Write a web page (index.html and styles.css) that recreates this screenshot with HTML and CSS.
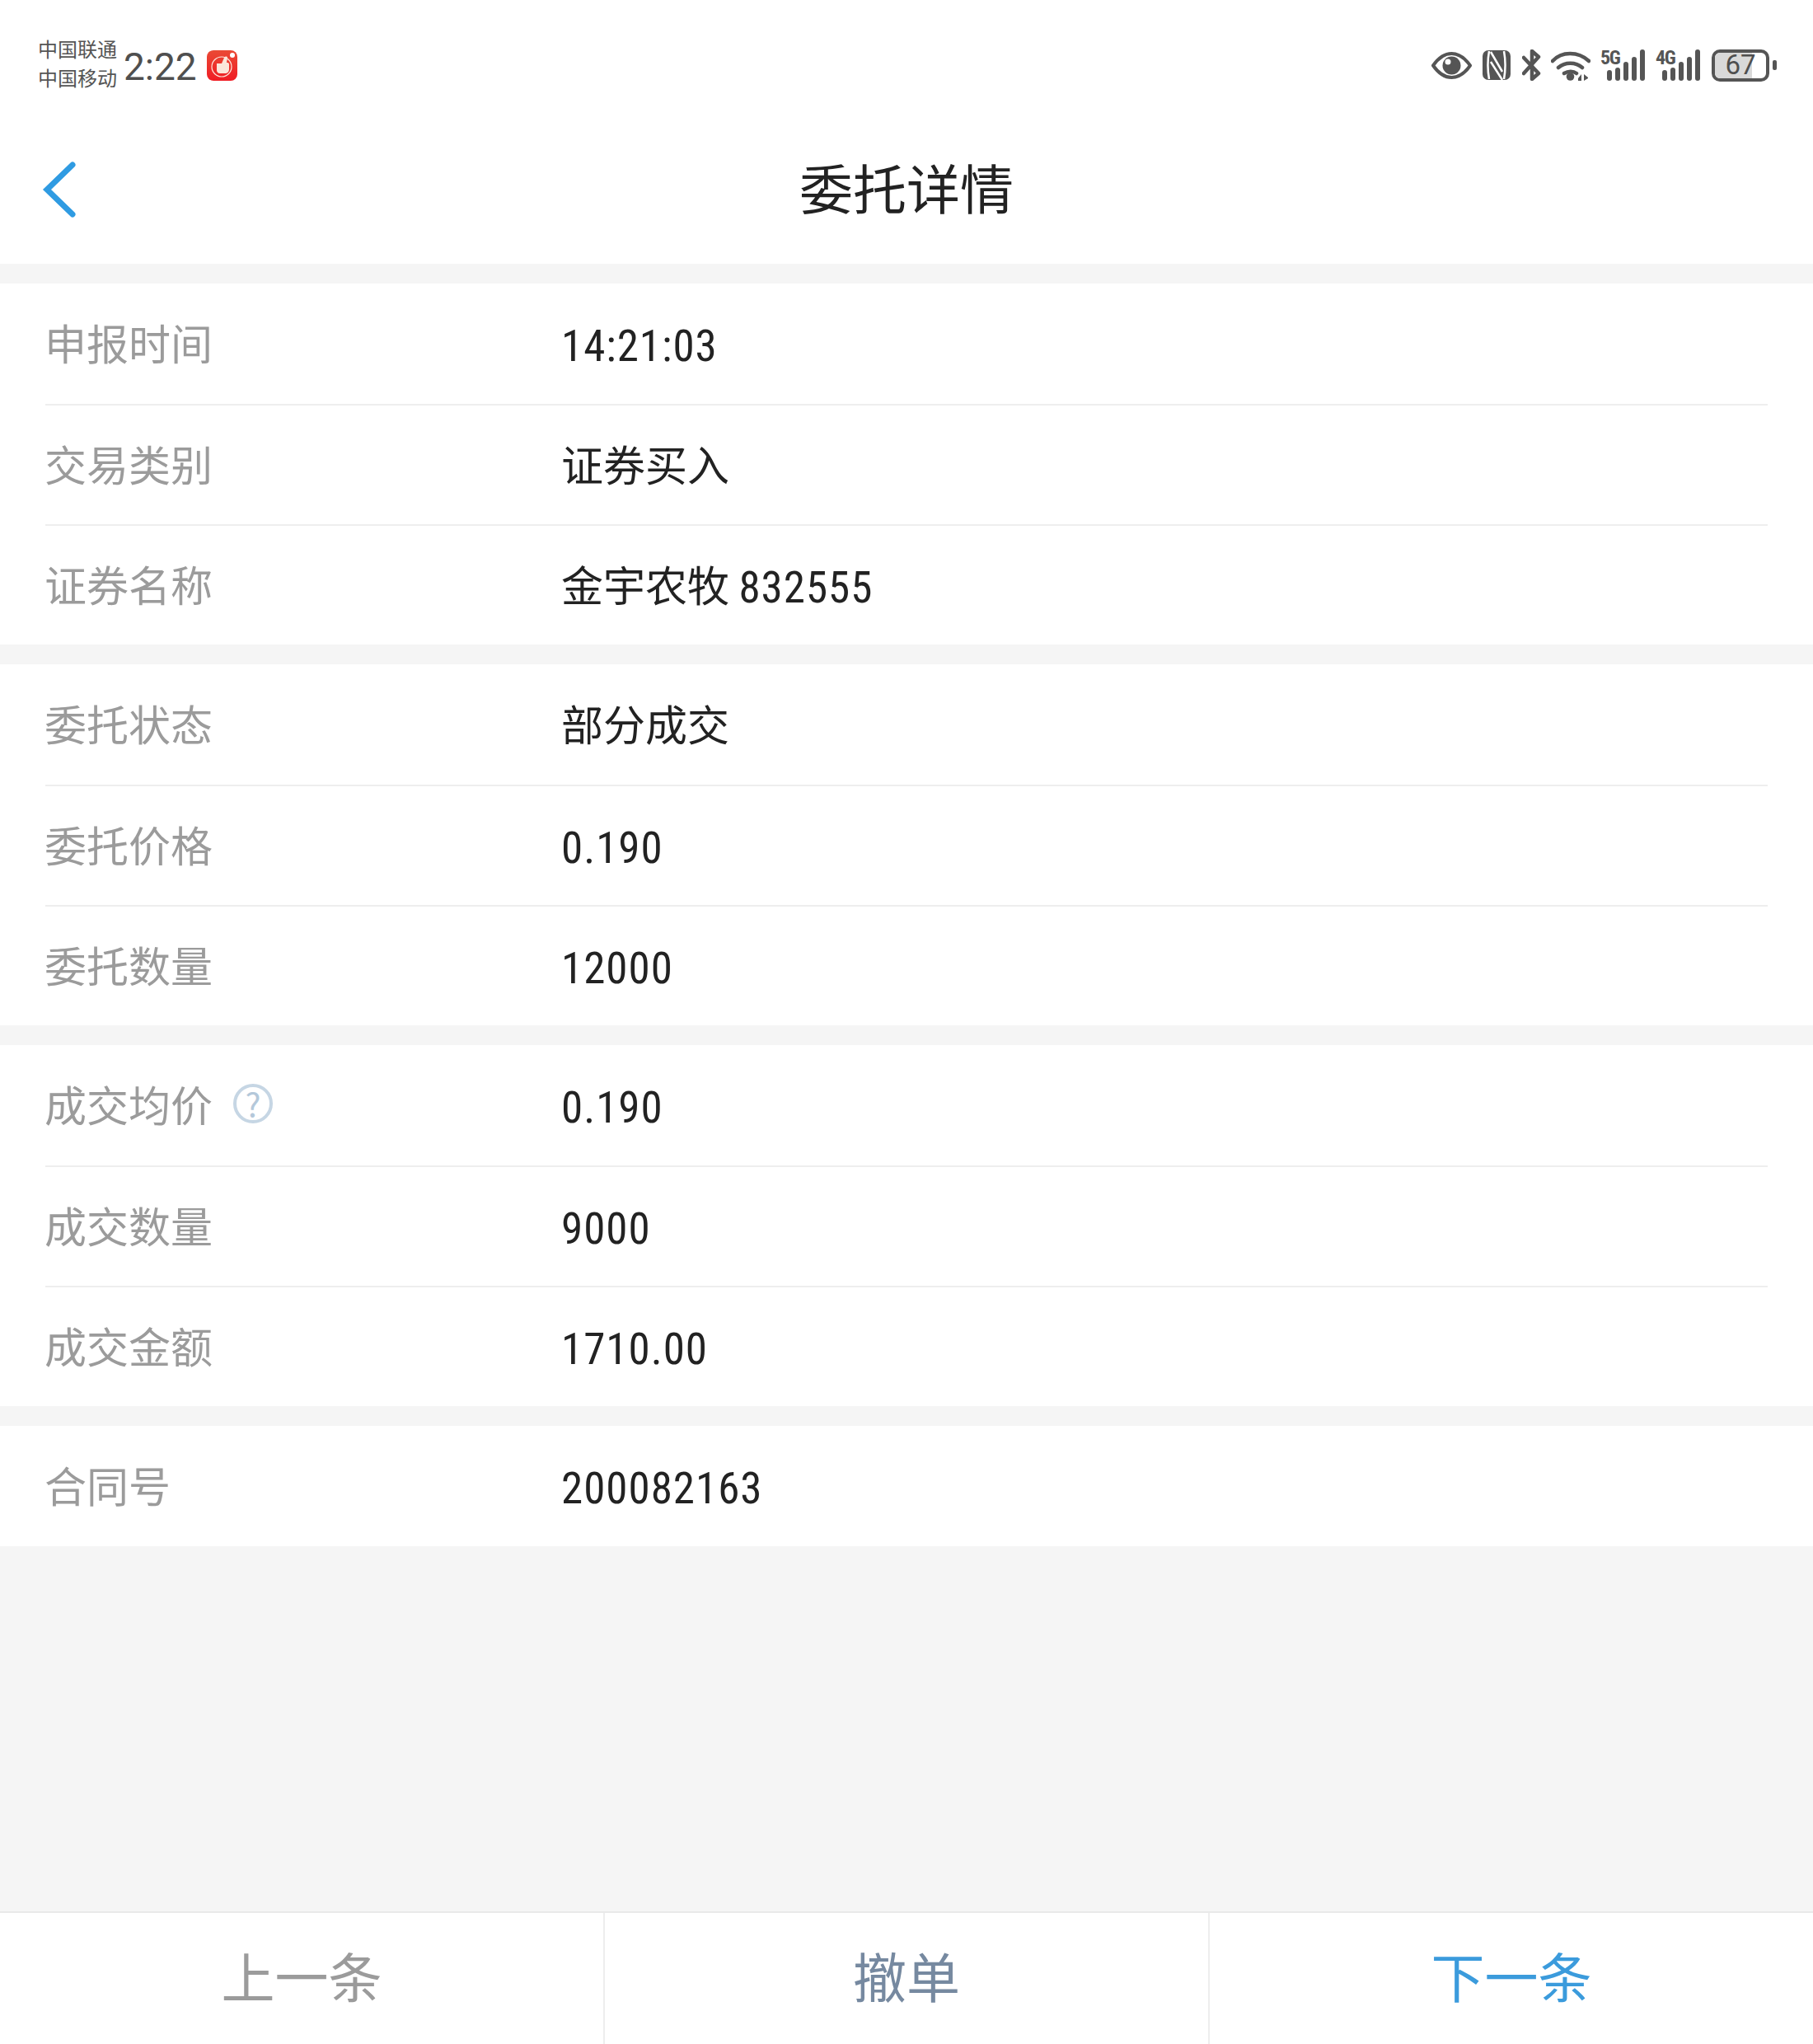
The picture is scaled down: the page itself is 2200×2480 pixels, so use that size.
FILE: index.html
```html
<!DOCTYPE html>
<html lang="zh-CN">
<head>
<meta charset="utf-8">
<title>委托详情</title>
<link rel="stylesheet" href="styles.css">
</head>
<body>
<div class="page">
  <header class="head">
    <div class="status">
      <div class="status-left">
        <div class="carriers"><span>中国联通</span><span>中国移动</span></div>
        <span class="clock">2:22</span>
        <svg class="app" width="37" height="37" viewBox="0 0 37 37">
          <defs><linearGradient id="red" x1="0" y1="0" x2="0" y2="1"><stop offset="0" stop-color="#ea4a35"/><stop offset="1" stop-color="#f01c24"/></linearGradient></defs>
          <rect width="37" height="37" rx="8" fill="url(#red)"/>
          <circle cx="18" cy="20" r="12" fill="none" stroke="#fde9df" stroke-width="1.2"/>
          <path d="M12 16h6l3-7c1-2 4-2 4 0l-1 6h1c1.500 0 2 1 2 2v6c0 3-2 5-5 5h-6c-3 0-4-2-4-4z" fill="#fbe6da"/>
          <circle cx="31" cy="6" r="3" fill="#fff"/>
        </svg>
      </div>
      <div class="status-right">
        <svg class="eye" width="49" height="33" viewBox="0 0 49 33"><path d="M2 16.500C9 6.500 16 2 24.500 2S40 6.500 47 16.500C40 26.500 33 31 24.500 31S9 26.500 2 16.500z" fill="none" stroke="#555" stroke-width="4" stroke-linejoin="round"/><circle cx="24.500" cy="16.500" r="11" fill="#555"/><circle cx="20" cy="12" r="3.500" fill="#fff"/></svg>
        <svg class="nfc" width="34" height="36" viewBox="0 0 34 36"><rect width="34" height="36" rx="7" fill="#555"/><path d="M8 1c-2 11-2 23 0 34M26 1c2 11 2 23 0 34" fill="none" stroke="#fff" stroke-width="2.500"/><path d="M10 2l14 24M10 14l14 22" fill="none" stroke="#fff" stroke-width="2.500"/></svg>
        <svg class="bt" width="23" height="38" viewBox="0 0 23 38"><path d="M2 10l18 19-8 7V2l8 7L2 29" fill="none" stroke="#555" stroke-width="4.500" stroke-linejoin="round" stroke-linecap="round"/></svg>
        <svg class="wifi" width="48" height="37" viewBox="0 0 48 37"><path d="M2 13C13 1 33 1 46 13M9 21c8-7 21-7 29 0M16 28c5-3 11-3 15 0" fill="none" stroke="#555" stroke-width="4.500" stroke-linecap="round"/><circle cx="23.500" cy="32" r="4.800" fill="#555"/><path d="M37 37v-8l-4 5v3zM40 29v8l5-3v-1z" fill="#555"/></svg>
        <div class="signal">
          <span class="net">5G</span>
          <svg width="46" height="38" viewBox="0 0 46 38"><g fill="#555"><rect x="0" y="25" width="6" height="13" rx="3"/><rect x="10" y="22" width="6" height="16" rx="3"/><rect x="20" y="15" width="6" height="23" rx="3"/><rect x="30" y="9" width="6" height="29" rx="3"/><rect x="40" y="0" width="6" height="38" rx="3"/></g></svg>
        </div>
        <div class="signal">
          <span class="net">4G</span>
          <svg width="46" height="38" viewBox="0 0 46 38"><g fill="#555"><rect x="0" y="25" width="6" height="13" rx="3"/><rect x="10" y="22" width="6" height="16" rx="3"/><rect x="20" y="15" width="6" height="23" rx="3"/><rect x="30" y="9" width="6" height="29" rx="3"/><rect x="40" y="0" width="6" height="38" rx="3"/></g></svg>
        </div>
        <div class="battery"><span class="battery-fill"></span><span class="battery-num">67</span></div>
        <span class="nub"></span>
      </div>
    </div>
    <div class="nav">
      <svg class="back" width="48" height="72" viewBox="0 0 48 72"><path d="M37 6L6 36l31 30" fill="none" stroke="#2f9be2" stroke-width="7" stroke-linecap="round" stroke-linejoin="miter"/></svg>
      <h1 class="title">委托详情</h1>
    </div>
  </header>

  <main class="content">
    <section class="group">
      <div class="row"><span class="label">申报时间</span><span class="value"><span class="num">14:21:03</span></span></div>
      <div class="row"><span class="label">交易类别</span><span class="value">证券买入</span></div>
      <div class="row"><span class="label">证券名称</span><span class="value">金宇农牧 <span class="num">832555</span></span></div>
    </section>
    <section class="group">
      <div class="row"><span class="label">委托状态</span><span class="value">部分成交</span></div>
      <div class="row"><span class="label">委托价格</span><span class="value"><span class="num">0.190</span></span></div>
      <div class="row"><span class="label">委托数量</span><span class="value"><span class="num">12000</span></span></div>
    </section>
    <section class="group">
      <div class="row"><span class="label">成交均价<span class="help">?</span></span><span class="value"><span class="num">0.190</span></span></div>
      <div class="row"><span class="label">成交数量</span><span class="value"><span class="num">9000</span></span></div>
      <div class="row"><span class="label">成交金额</span><span class="value"><span class="num">1710.00</span></span></div>
    </section>
    <section class="group">
      <div class="row"><span class="label">合同号</span><span class="value"><span class="num">200082163</span></span></div>
    </section>
  </main>

  <footer class="actions">
    <button class="action prev">上一条</button>
    <button class="action cancel">撤单</button>
    <button class="action next">下一条</button>
  </footer>
</div>
</body>
</html>
```
FILE: styles.css
```css
* { box-sizing: border-box; }
html, body { margin: 0; padding: 0; }
body { font-family: "Noto Sans CJK SC", "Liberation Sans", sans-serif; background: #f5f5f5; }
.page { width: 2200px; height: 2480px; display: flex; flex-direction: column; background: #f5f5f5; overflow: hidden; }

.head { height: 320px; background: #fff; flex: none; }
.status { height: 140px; padding: 40px 44px 0 46px; display: flex; justify-content: space-between; align-items: flex-start; }
.status-left { display: flex; align-items: center; height: 80px; }
.carriers { display: flex; flex-direction: column; width: 104px; height: 80px; margin-top: -4px; padding-top: 3px; font-size: 24px; line-height: 35px; color: #555; }
.clock { font-family: Roboto, sans-serif; font-size: 46px; line-height: 80px; color: #4f4f4f; width: 101px; margin-top: 1px; }
.app { display: block; margin-top: -2px; }
.status-right { display: flex; align-items: center; height: 78px; margin-top: 0; }
.status-right svg { display: block; flex: none; }
.eye { margin-right: 13px; }
.nfc { margin-right: 14px; }
.bt { margin-right: 12px; }
.wifi { margin-right: 12px; }
.signal { position: relative; width: 54px; margin-right: 13px; display: flex; justify-content: flex-end; }
.net { position: absolute; left: 0; top: 0; font-family: Roboto, sans-serif; font-weight: 700; font-stretch: 75%; font-size: 24px; line-height: 20px; letter-spacing: -1.500px; color: #555; }
.battery { position: relative; width: 70px; height: 39px; border: 4px solid #555; border-radius: 10px; overflow: hidden; margin-left: 1px; display: flex; align-items: center; justify-content: center; }
.battery-fill { position: absolute; left: 0; top: 0; bottom: 0; width: 72%; background: #d9d9d9; }
.battery-num { position: relative; font-family: Roboto, sans-serif; font-size: 33px; line-height: 32px; color: #4f4f4f; }
.nub { width: 5px; height: 12px; border-radius: 2px; background: #555; margin-left: 4px; }

.nav { position: relative; height: 180px; display: flex; align-items: center; justify-content: center; }
.back { position: absolute; left: 51px; top: 54px; display: block; }
.title { margin: -8px 0 0; font-size: 65px; font-weight: 400; line-height: 90px; color: #222; }

.content { flex: 1; }
.group { margin-top: 24px; background: #fff; padding: 0 55px; }
.row { height: 146px; display: flex; align-items: center; padding-bottom: 5px; }
.row + .row { border-top: 2px solid #eeeeee; }
.label { width: 627px; margin-left: -1px; display: flex; align-items: center; font-size: 51px; line-height: 70px; color: #9b9b9b; }
.value { font-size: 51px; line-height: 70px; color: #222; }
.num { font-family: Roboto, "Noto Sans CJK SC", sans-serif; font-size: 53px; font-weight: 400; font-stretch: 75%; letter-spacing: 1px; line-height: 1; vertical-align: -1px; }
.help { width: 48px; height: 48px; margin-left: 25px; border: 4px solid #c6d6e4; border-radius: 50%; font-size: 40px; line-height: 38px; text-align: center; color: #b4c8da; }

.actions { flex: none; height: 161px; display: flex; background: #fff; border-top: 2px solid #e9e9e9; }
.action { flex: 1; border: 0; border-left: 2px solid #eeeeee; background: #fff; padding: 0 0 10px; font-family: "Noto Sans CJK SC", sans-serif; font-size: 65px; line-height: 90px; }
.prev { border-left: 0; color: #9b9b9b; }
.cancel { color: #7689a0; }
.next { color: #3b9bdc; }
```
